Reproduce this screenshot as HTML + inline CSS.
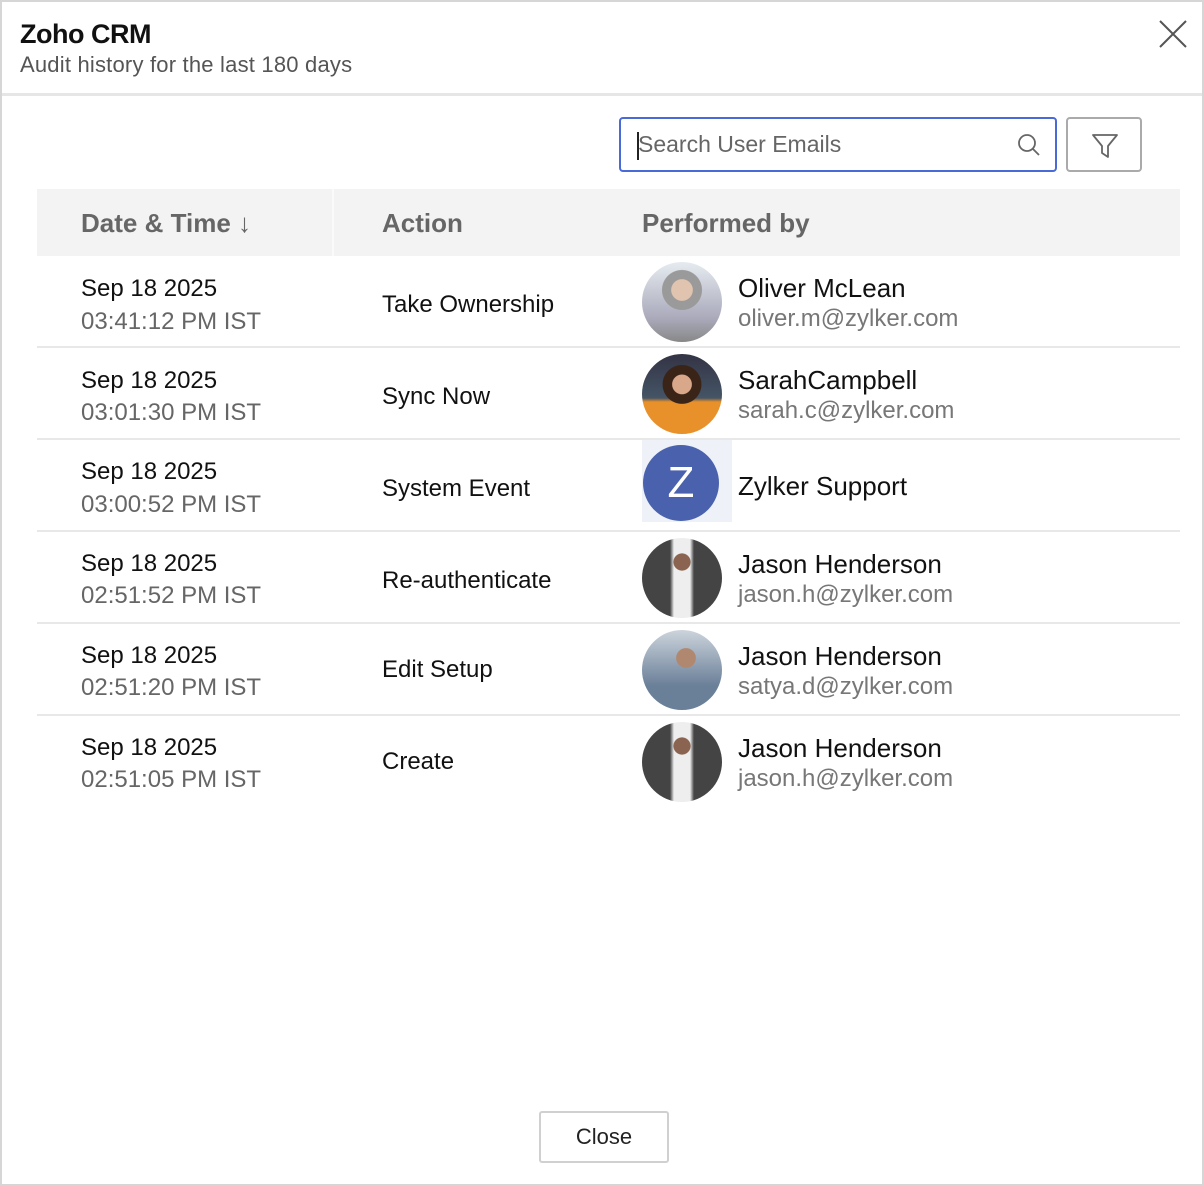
<!DOCTYPE html>
<html><head><meta charset="utf-8"><style>
*{margin:0;padding:0;box-sizing:border-box}
body{width:1204px;height:1186px;background:#fff;font-family:"Liberation Sans",sans-serif;position:relative;overflow:hidden}
.frame{position:absolute;left:0;top:0;width:1204px;height:1186px;border:2px solid #d6d6d6}
.hdr{position:absolute;left:2px;top:2px;width:1200px;height:94px;border-bottom:3px solid #e6e6e6}
.t1{position:absolute;left:18px;top:17px;font-size:27px;font-weight:bold;color:#111;letter-spacing:-0.5px}
.t2{position:absolute;left:18px;top:50px;font-size:22px;color:#555;letter-spacing:0.2px}
.x{position:absolute;left:1156px;top:17px}
.search{position:absolute;left:619px;top:117px;width:438px;height:55px;border:2px solid #4a6ad8;border-radius:4px}
.search span{position:absolute;left:17px;top:12px;font-size:23px;color:#666}
.search .cur{position:absolute;left:16px;top:13px;width:2px;height:28px;background:#222}
.filt{position:absolute;left:1066px;top:117px;width:76px;height:55px;border:2px solid #aaa;border-radius:4px}
.thead{position:absolute;left:37px;top:189px;width:1143px;height:67px;background:#f3f3f3}
.th{position:absolute;top:208px;font-size:26px;font-weight:bold;color:#666}
.row{position:absolute;left:37px;width:1143px;height:92px;border-bottom:2px solid #e8e8e8}
.d1{position:absolute;left:44px;font-size:24px;color:#111}
.d2{position:absolute;left:44px;font-size:24px;color:#666}
.act{position:absolute;left:345px;font-size:24px;color:#111}
.av{position:absolute;left:605px;width:80px;height:80px;border-radius:50%}
.nm{position:absolute;left:701px;font-size:26px;color:#111}
.em{position:absolute;left:701px;font-size:24px;color:#777}
.close{position:absolute;left:539px;top:1111px;width:130px;height:52px;border:2px solid #d0d0d0;border-radius:3px;font-size:22px;color:#222;text-align:center;line-height:48px}
</style></head><body>
<div class="frame"></div>
<div class="hdr"><div class="t1">Zoho CRM</div><div class="t2">Audit history for the last 180 days</div>
<svg class="x" width="30" height="30" viewBox="0 0 30 30"><path d="M2 2L28 28M28 2L2 28" stroke="#555" stroke-width="2"/></svg></div>
<div class="search"><div class="cur"></div><span>Search User Emails</span>
<svg style="position:absolute;left:396px;top:14px" width="24" height="24" viewBox="0 0 24 24"><circle cx="10" cy="10" r="8" fill="none" stroke="#666" stroke-width="1.8"/><path d="M16 16L22 22" stroke="#666" stroke-width="1.8"/></svg></div>
<div class="filt"><svg style="position:absolute;left:22px;top:12px" width="30" height="30" viewBox="0 0 30 30"><path d="M3 4H27L18 15V26L12 22V15Z" fill="none" stroke="#666" stroke-width="1.8" stroke-linejoin="round"/></svg></div>
<div class="thead"><div style="position:absolute;left:295px;top:0;width:2px;height:67px;background:#fafafa"></div></div>
<div class="th" style="left:81px">Date &amp; Time ↓</div>
<div class="th" style="left:382px">Action</div>
<div class="th" style="left:642px">Performed by</div>

<div class="row" style="top:256px"><div class="d1" style="top:19px">Sep 18 2025</div><div class="d2" style="top:52px">03:41:12 PM IST</div><div class="act" style="top:35px">Take Ownership</div>
<div class="av" style="top:6px;background:radial-gradient(circle at 50% 35%,#e0c4b0 0 16%,#9a9a9a 17% 30%,transparent 31%),linear-gradient(#e6ebf0,#aab 70%,#888)"></div>
<div class="nm" style="top:17px">Oliver McLean</div><div class="em" style="top:49px">oliver.m@zylker.com</div></div>

<div class="row" style="top:348px"><div class="d1" style="top:19px">Sep 18 2025</div><div class="d2" style="top:51px">03:01:30 PM IST</div><div class="act" style="top:35px">Sync Now</div>
<div class="av" style="top:6px;background:radial-gradient(circle at 50% 38%,#d9a88a 0 15%,#3a2418 16% 30%,transparent 31%),linear-gradient(#334,#456 55%,#e8902a 60%)"></div>
<div class="nm" style="top:17px">SarahCampbell</div><div class="em" style="top:49px">sarah.c@zylker.com</div></div>

<div class="row" style="top:440px"><div class="d1" style="top:18px">Sep 18 2025</div><div class="d2" style="top:51px">03:00:52 PM IST</div><div class="act" style="top:35px">System Event</div>
<div style="position:absolute;left:605px;top:0;width:90px;height:82px;background:#eef2f8"></div>
<div class="av" style="top:5px;left:606px;width:76px;height:76px;background:#4a62ad;color:#fff;font-size:44px;text-align:center;line-height:76px">Z</div>
<div class="nm" style="top:31px">Zylker Support</div></div>

<div class="row" style="top:532px"><div class="d1" style="top:18px">Sep 18 2025</div><div class="d2" style="top:50px">02:51:52 PM IST</div><div class="act" style="top:35px">Re-authenticate</div>
<div class="av" style="top:6px;background:radial-gradient(circle at 50% 30%,#8a6450 0 12%,transparent 13%),linear-gradient(90deg,#444 35%,#eee 40% 60%,#444 65%)"></div>
<div class="nm" style="top:17px">Jason Henderson</div><div class="em" style="top:49px">jason.h@zylker.com</div></div>

<div class="row" style="top:624px"><div class="d1" style="top:18px">Sep 18 2025</div><div class="d2" style="top:50px">02:51:20 PM IST</div><div class="act" style="top:32px">Edit Setup</div>
<div class="av" style="top:6px;background:radial-gradient(circle at 55% 35%,#b08870 0 14%,transparent 15%),linear-gradient(#ccd4dc,#6a7f98 70%)"></div>
<div class="nm" style="top:17px">Jason Henderson</div><div class="em" style="top:49px">satya.d@zylker.com</div></div>

<div class="row" style="top:716px;border-bottom:none"><div class="d1" style="top:18px">Sep 18 2025</div><div class="d2" style="top:50px">02:51:05 PM IST</div><div class="act" style="top:32px">Create</div>
<div class="av" style="top:6px;background:radial-gradient(circle at 50% 30%,#8a6450 0 12%,transparent 13%),linear-gradient(90deg,#444 35%,#eee 40% 60%,#444 65%)"></div>
<div class="nm" style="top:17px">Jason Henderson</div><div class="em" style="top:49px">jason.h@zylker.com</div></div>

<div class="close">Close</div>
</body></html>
